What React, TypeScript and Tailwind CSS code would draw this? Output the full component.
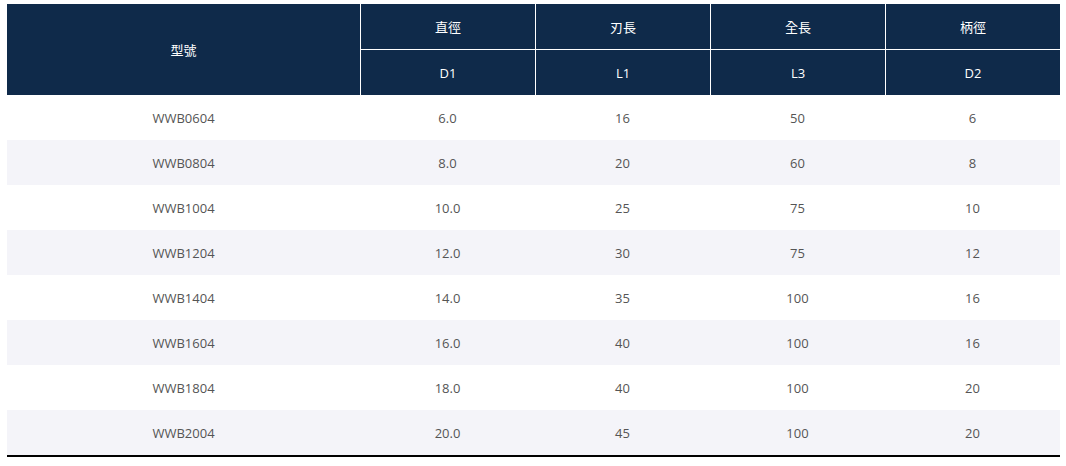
import React from "react";

const rows = [
  ["WWB0604", "6.0", "16", "50", "6"],
  ["WWB0804", "8.0", "20", "60", "8"],
  ["WWB1004", "10.0", "25", "75", "10"],
  ["WWB1204", "12.0", "30", "75", "12"],
  ["WWB1404", "14.0", "35", "100", "16"],
  ["WWB1604", "16.0", "40", "100", "16"],
  ["WWB1804", "18.0", "40", "100", "20"],
  ["WWB2004", "20.0", "45", "100", "20"],
];

const font = { fontFamily: '"Open Sans", "Noto Sans CJK TC", sans-serif' };

export default function App() {
  return (
    <div className="bg-white w-[1066px] h-[466px] pt-[4px] pl-[7px]" style={font}>
      <div className="w-[1053px] border-b-2 border-black">
        <div className="flex bg-[#0f2a4a] text-white text-[13px]">
          <div className="w-[353px] h-[91px] flex items-center justify-center pt-[2px]">型號</div>
          {[
            ["直徑", "D1"],
            ["刃長", "L1"],
            ["全長", "L3"],
            ["柄徑", "D2"],
          ].map(([a, b]) => (
            <div key={a} className="w-[175px] flex flex-col border-l border-white">
              <div className="h-[46px] flex items-center justify-center border-b border-white pt-[2px]">{a}</div>
              <div className="h-[45px] flex items-center justify-center pt-[2px]">{b}</div>
            </div>
          ))}
        </div>
        {rows.map((r, i) => (
          <div
            key={r[0]}
            className={`flex h-[45px] text-[13px] text-[#555] pt-[3px] ${i % 2 === 1 ? "bg-[#f4f4f9]" : "bg-white"}`}
          >
            <div className="w-[353px] flex items-center justify-center">{r[0]}</div>
            {r.slice(1).map((c, j) => (
              <div key={j} className="w-[175px] flex items-center justify-center">{c}</div>
            ))}
          </div>
        ))}
      </div>
    </div>
  );
}
